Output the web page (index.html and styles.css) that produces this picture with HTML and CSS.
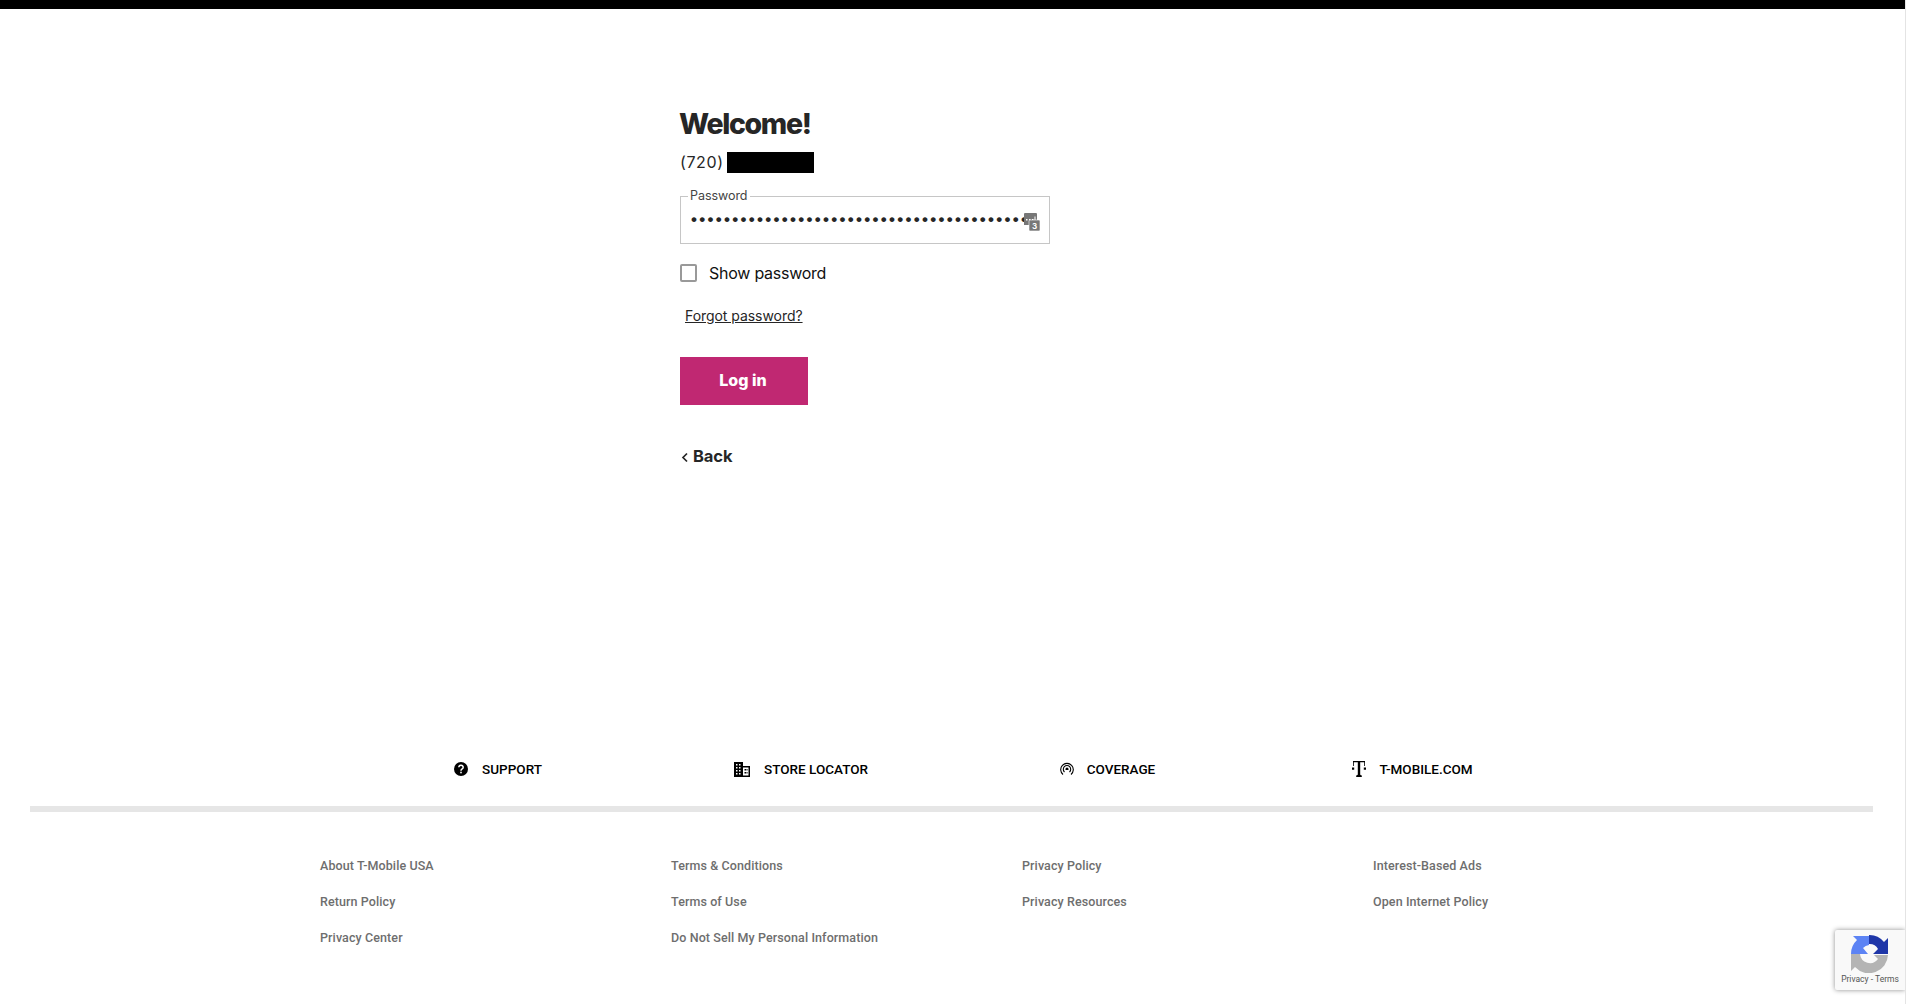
FILE: index.html
```html
<!DOCTYPE html>
<html lang="en">
<head>
<meta charset="utf-8">
<title>T-Mobile Log in</title>
<link rel="stylesheet" href="styles.css">
</head>
<body>
<div class="topbar"></div>
<main class="login">
  <h1 class="title">Welcome!</h1>
  <div class="phone"><span>(720)</span><span class="redact"></span></div>
  <fieldset class="field">
    <legend class="legend">Password</legend>
    <input class="pw" type="password" value="12345678901234567890123456789012345678901" aria-label="Password">
    <svg class="pm" width="18" height="19" viewBox="0 0 18 19">
      <path fill="#777" d="M1 2a1 1 0 0 1 1-1h11a1 1 0 0 1 1 1v11H1z"/>
      <path fill="#fff" d="M3 7h1.500v1.500H3zm3 0h1.500v1.500H6zm3 0h1.500v1.500H9zm2.500-2.500h1v4h-1z"/>
      <rect x="6" y="8" width="11" height="11" rx="1" fill="#777" stroke="#fff" stroke-width=".6"/>
      <text x="11.500" y="17" class="pm-num">3</text>
    </svg>
  </fieldset>
  <label class="show"><span class="box"></span><span>Show password</span></label>
  <a class="forgot" href="#">Forgot password?</a>
  <button class="login-btn" type="button">Log in</button>
  <a class="back" href="#">
    <svg class="chev" width="8" height="11" viewBox="0 0 8 11"><path d="M6 1.500 2 5.500 6 9.500" fill="none" stroke="#262626" stroke-width="1.700"/></svg>
    <span>Back</span>
  </a>
</main>
<footer class="footer">
  <nav class="quick">
    <a class="quick-item" href="#">
      <svg width="16" height="16" viewBox="0 0 16 16"><circle cx="8" cy="8" r="7" fill="#000"/><path d="M5.800 6.200a2.200 2 0 1 1 3.400 1.700c-.8.500-1.200.9-1.200 1.800" fill="none" stroke="#fff" stroke-width="1.500"/><rect x="7.200" y="10.700" width="1.600" height="1.600" fill="#fff"/></svg>
      <span>SUPPORT</span>
    </a>
    <a class="quick-item store" href="#">
      <svg width="16" height="15" viewBox="0 0 16 15"><path fill="#000" d="M0 0h9v4h7v11H0z"/><path fill="#fff" d="M2 2h1.500v1.500H2zm3 0h1.500v1.500H5zM2 5h1.500v1.500H2zm3 0h1.500v1.500H5zM2 8h1.500v1.500H2zm3 0h1.500v1.500H5zM2 11h1.500v1.500H2zm3 0h1.500v1.500H5zM9 5.500h5.500v8H9z"/><path fill="#000" d="M10.500 7H12v1.500h-1.500zm2 0h1v1.500h-1zm-2 3H12v1.500h-1.500zm2 0h1v1.500h-1z"/></svg>
      <span>STORE LOCATOR</span>
    </a>
    <a class="quick-item" href="#">
      <svg width="14" height="14" viewBox="0 0 14 14" fill="none" stroke="#000" stroke-width="1.100"><path d="M3 12.500a6.300 6.300 0 1 1 8 0"/><path d="M4.500 10a3.700 3.700 0 1 1 5 0"/><path fill="#000" stroke="none" d="M5.500 7a1.500 1.500 0 1 1 3 0v1h-3z"/></svg>
      <span>COVERAGE</span>
    </a>
    <a class="quick-item" href="#">
      <svg width="14" height="16" viewBox="0 0 14 16"><path fill="#000" d="M1 0h12v5h-.8V1.300H8.200V13c0 1 .4 1.400 1.600 1.400V16H4.200v-1.600c1.200 0 1.600-.4 1.600-1.400V1.300H1.800V5H1z"/><path fill="#000" d="M0 6.500h2.200v2.200H0zm11.800 0H14v2.200h-2.200z"/></svg>
      <span>T-MOBILE.COM</span>
    </a>
  </nav>
  <div class="rule"></div>
  <div class="links">
    <a href="#">About T-Mobile USA</a>
    <a href="#">Terms &amp; Conditions</a>
    <a href="#">Privacy Policy</a>
    <a href="#">Interest-Based Ads</a>
    <a href="#">Return Policy</a>
    <a href="#">Terms of Use</a>
    <a href="#">Privacy Resources</a>
    <a href="#">Open Internet Policy</a>
    <a href="#">Privacy Center</a>
    <a href="#">Do Not Sell My Personal Information</a>
  </div>
</footer>
<aside class="recaptcha">
  <svg width="38" height="38" viewBox="0 0 38 38">
    <path fill="#b4b4b4" d="M0 19h9a10 10 0 0 0 18 5l-4-4h14a19 19 0 0 1-33 12L0 36z"/>
    <path fill="#5c83f4" d="M0 19A19 19 0 0 1 6 5L2 1h16v9a9.500 9.500 0 0 0-6 3l5 6z"/>
    <path fill="#1f36a8" d="M18 0a19 19 0 0 1 15 7l4-4v16H22l5-5a9.500 9.500 0 0 0-9-5z"/>
  </svg>
  <div class="rc-text">Privacy - Terms</div>
</aside>
</body>
</html>
```
FILE: styles.css
```css
* { box-sizing: border-box; }
html, body { margin: 0; height: 100%; }
body {
  position: relative;
  height: 1004px;
  overflow: hidden;
  background: #fff;
  color: #262626;
  font-family: Inter, "Liberation Sans", sans-serif;
  border-right: 1px solid #e4e4e4;
}
a { color: inherit; }
.topbar { height: 9px; background: #000; }
.login {
  display: flex;
  flex-direction: column;
  align-items: flex-start;
  height: 735px;
  padding: 97px 0 0 680px;
}
.title { margin: 0 0 0 -1px; font-size: 28.500px; line-height: 36px; font-weight: 800; letter-spacing: -1.350px; }
.phone { display: flex; align-items: center; gap: 3px; margin-top: 10px; font-size: 16px; line-height: 21px; font-weight: 400; letter-spacing: .6px; }
.redact { width: 87px; height: 21px; background: #000; }
.field {
  position: relative;
  width: 370px;
  height: 55px;
  margin: 16px 0 0;
  padding: 0 8px;
  border: 1px solid #c6c6c6;
}
.legend { margin-left: -1px; padding: 0 3px 0 2px; font-size: 12.500px; line-height: 14px; color: #444; letter-spacing: -.05px; }
.pw {
  display: block;
  width: 100%;
  height: 30px;
  margin-top: 2px;
  padding: 0 0 0 2px;
  border: 0;
  outline: 0;
  background: transparent;
  font: 700 17px "Liberation Sans", sans-serif;
  letter-spacing: 2.300px;
  color: #262626;
}
.pm { position: absolute; top: 9px; right: 8px; }
.pm-num { font: 700 8px Inter, sans-serif; fill: #fff; text-anchor: middle; }
.show { display: flex; align-items: center; gap: 12px; margin-top: 19px; font-size: 16px; line-height: 20px; letter-spacing: -.25px; color: #111; }
.box { width: 17px; height: 18px; border: 2px solid #999; border-radius: 2px; background: #fff; }
.forgot { margin: 23px 0 0 5px; font-size: 14px; line-height: 20px; letter-spacing: -.05px; }
.login-btn {
  width: 128px;
  height: 48px;
  margin-top: 31px;
  border: 0;
  background: #c02872;
  color: #fff;
  font: 800 16px Inter, sans-serif;
  padding: 0 2px 2px 0;
}
.back { display: flex; align-items: center; gap: 4px; margin-top: 41px; padding-left: 1px; font-size: 16.500px; line-height: 20px; font-weight: 700; letter-spacing: -.1px; text-decoration: none; }
.chev { margin-top: 2px; }
.quick {
  display: grid;
  grid-template-columns: repeat(4, 305px);
  justify-content: start;
  padding-left: 345px;
  height: 62px;
  align-items: start;
}
.quick-item {
  display: flex;
  align-items: center;
  justify-content: center;
  gap: 13px;
  height: 22px;
  margin-top: 14px;
  color: #000;
  text-decoration: none;
  font: 500 13.500px Roboto, sans-serif;
}
.store { gap: 14px; padding-right: 3px; }
.rule { height: 6px; margin: 0 32px 0 30px; background: #e6e6e6; }
.links {
  display: grid;
  grid-template-columns: repeat(4, 351px);
  grid-auto-rows: 36px;
  padding: 36px 0 0 320px;
}
.links a {
  font: 500 12.500px/36px Roboto, sans-serif;
  letter-spacing: .1px;
  color: #6e6e6e;
  text-decoration: none;
}
.recaptcha {
  position: absolute;
  right: 0;
  top: 930px;
  width: 70px;
  height: 60px;
  display: flex;
  flex-direction: column;
  align-items: center;
  padding-top: 5px;
  background: #f9f9f9;
  border-radius: 2px 0 0 2px;
  box-shadow: 0 0 5px rgba(0,0,0,.45);
}
.rc-text { font: 400 8.500px/10px Roboto, sans-serif; color: #555; margin-top: 1px; white-space: nowrap; }
```
